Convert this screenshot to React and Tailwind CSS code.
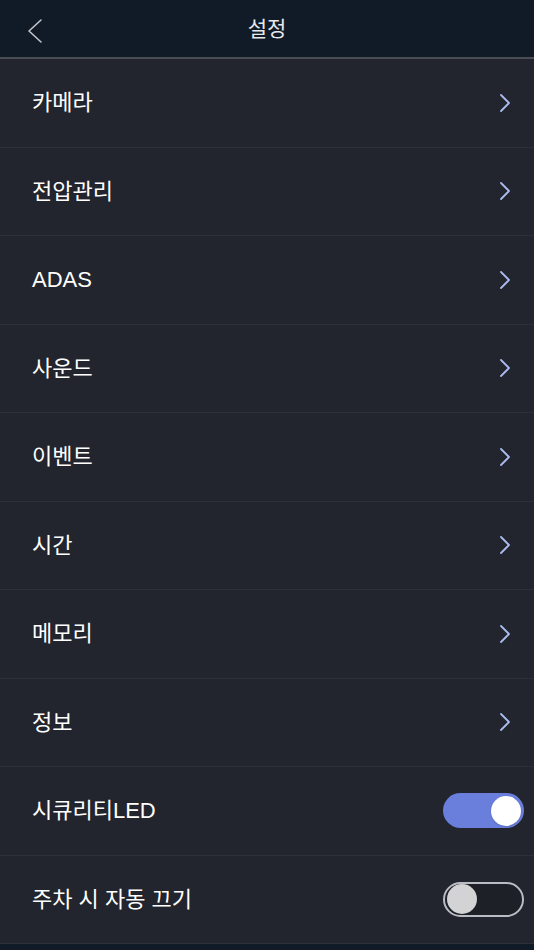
const ITEMS = ['카메라', '전압관리', 'ADAS', '사운드', '이벤트', '시간', '메모리', '정보']

const FONT = { fontFamily: "'Liberation Sans', 'Noto Sans CJK KR', sans-serif" }

function Chevron() {
  return (
    <svg width="14" height="20" viewBox="0 0 14 20" fill="none">
      <path d="M3 2 L11 10 L3 18" stroke="#a9bcef" strokeWidth="1.8" strokeLinecap="round" strokeLinejoin="round" />
    </svg>
  )
}

function Toggle({ on }) {
  return on ? (
    <div className="w-[81px] h-[35px] rounded-full bg-[#6a7fdc] flex items-center justify-end pr-[3px]">
      <div className="w-[30px] h-[30px] rounded-full bg-white shadow" />
    </div>
  ) : (
    <div className="w-[81px] h-[35px] rounded-full border-2 border-[#b9bcc2] bg-[#1d2027] flex items-center pl-[2px]">
      <div className="w-[30px] h-[30px] rounded-full bg-[#d3d3d5]" />
    </div>
  )
}

function Row({ label, right }) {
  return (
    <div className="h-[88.5px] flex items-center justify-between pl-8 pr-[10px] border-b border-[#2d3038]">
      <span className="text-white text-[22px]" style={FONT}>{label}</span>
      {right}
    </div>
  )
}

export default function App() {
  return (
    <div className="w-[534px] h-[950px] bg-[#22252d] flex flex-col overflow-hidden" style={FONT}>
      {/* Header */}
      <div className="h-[57px] bg-[#111a27] flex items-center justify-center relative shrink-0">
        <div className="absolute left-[26px] top-[18px]">
          <svg width="18" height="26" viewBox="0 0 18 26" fill="none">
            <path d="M15 2 L3 13 L15 24" stroke="#c4c6ca" strokeWidth="1.6" strokeLinecap="round" strokeLinejoin="round" />
          </svg>
        </div>
        <span className="text-[#e6e8ec] text-[21px]">설정</span>
      </div>
      <div className="h-[2px] bg-[#4a4d54] shrink-0" />

      {/* List */}
      <div className="flex-1">
        {ITEMS.map((label) => (
          <Row key={label} label={label} right={<div className="pr-[12px]"><Chevron /></div>} />
        ))}
        <Row label="시큐리티LED" right={<Toggle on />} />
        <Row label="주차 시 자동 끄기" right={<Toggle on={false} />} />
      </div>
      <div className="h-[7px] bg-[#111a27] shrink-0" />
    </div>
  )
}
